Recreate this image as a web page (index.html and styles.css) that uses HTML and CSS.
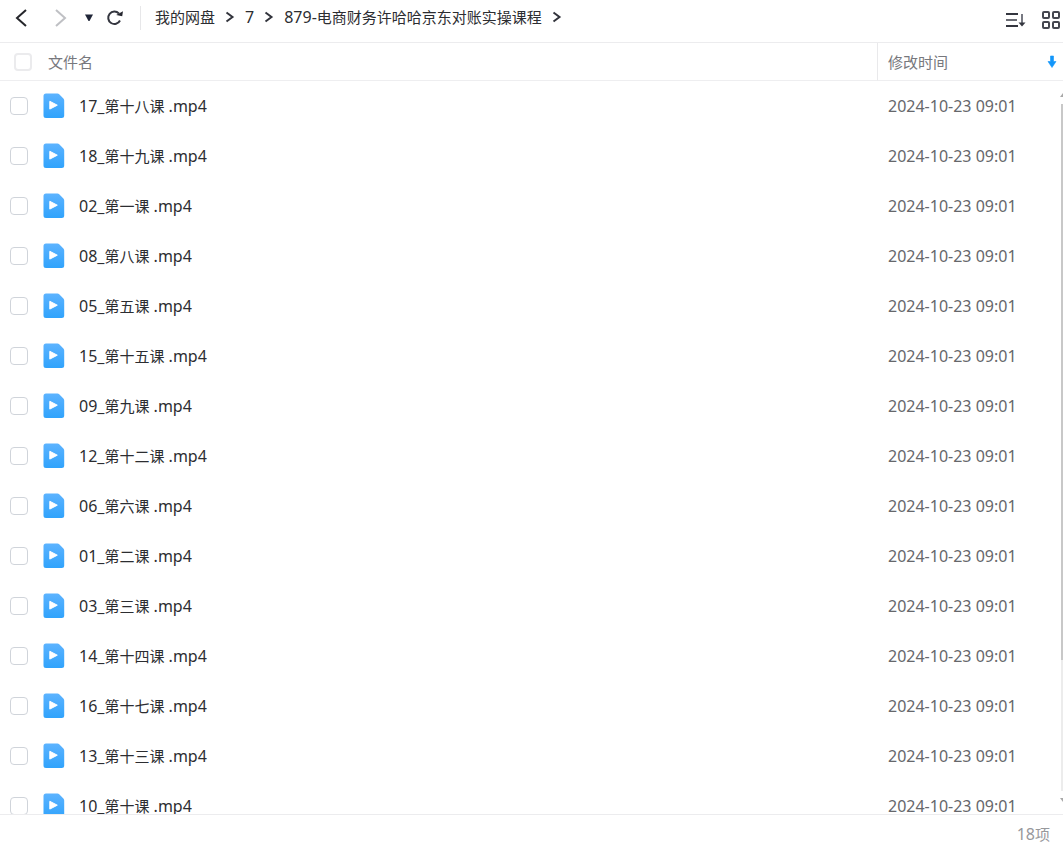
FILE: index.html
```html
<!DOCTYPE html>
<html lang="zh-CN">
<head>
<meta charset="utf-8">
<meta name="viewport" content="width=device-width, initial-scale=1">
<title>我的网盘</title>
<link rel="stylesheet" href="styles.css">
</head>
<body>
<svg class="defs" aria-hidden="true">
  <defs>
    <linearGradient id="file-fill" x1="0" y1="0" x2="0" y2="1">
      <stop offset="0" stop-color="#5cb3ff"/>
      <stop offset="1" stop-color="#30a3fc"/>
    </linearGradient>
    <symbol id="video" viewBox="0 0 22 26">
      <path d="M3 .5h11.500q1 0 1.700.7l4.200 4.300q.8.800.8 2v15a2.500 2.500 0 0 1-2.500 2.500H3A2.500 2.500 0 0 1 .5 22.500V3A2.500 2.500 0 0 1 3 .5z" fill="url(#file-fill)"/>
      <path d="M6.800 8.300v7.800l7.500-3.900z" fill="#fff" stroke="#fff" stroke-width="1" stroke-linejoin="round"/>
    </symbol>
    <symbol id="crumb" viewBox="0 0 10 12">
      <path d="M1.500 1.500 7.500 6l-6 4.500" fill="none" stroke="#32343c" stroke-width="2"/>
    </symbol>
  </defs>
</svg>
<div class="app">
  <header class="toolbar">
    <div class="nav">
      <button class="back" type="button" aria-label="后退"><svg width="14" height="20" viewBox="0 0 14 20"><path d="M12 2 3 10l9 8" fill="none" stroke="#25262b" stroke-width="2"/></svg></button>
      <button class="forward" type="button" aria-label="前进"><svg width="14" height="20" viewBox="0 0 14 20"><path d="m2 2 9 8-9 8" fill="none" stroke="#bfc0c4" stroke-width="2"/></svg></button>
      <button class="history" type="button" aria-label="历史"><svg width="10" height="8" viewBox="0 0 10 8"><path d="M1 .5h8L5.500 7h-1z" fill="#202638"/></svg></button>
      <button class="reload" type="button" aria-label="刷新"><svg width="18" height="18" viewBox="0 0 18 18"><path d="M14 11.500A6.200 6.200 0 1 1 12.900 4.500" fill="none" stroke="#34363f" stroke-width="2"/><path d="m10.200 6 6 1.300.8-5z" fill="#25262f"/></svg></button>
    </div>
    <nav class="crumbs" aria-label="路径">
      <a href="#"><span class="zh">我的网盘</span></a>
      <svg class="sep"><use href="#crumb"/></svg>
      <a href="#">7</a>
      <svg class="sep"><use href="#crumb"/></svg>
      <a href="#">879-<span class="zh">电商财务许哈哈京东对账实操课程</span></a>
      <svg class="sep"><use href="#crumb"/></svg>
    </nav>
    <div class="views">
      <button type="button" aria-label="排序"><svg width="22" height="18" viewBox="0 0 22 18"><path d="M1 3h12M1 15h12" stroke="#34363f" stroke-width="2"/><path d="M1 9h11" stroke="#6a6c74" stroke-width="2"/><path d="M17 3v10" stroke="#777982" stroke-width="2"/><path d="M13.500 11.500h7L17 15.500z" fill="#34363f"/></svg></button>
      <button type="button" aria-label="网格视图"><svg width="18" height="18" viewBox="0 0 18 18"><g fill="none" stroke="#454750" stroke-width="2"><rect x="1" y="1" width="6" height="6" rx="1"/><rect x="11" y="1" width="6" height="6" rx="1"/><rect x="1" y="11" width="6" height="6" rx="1"/><rect x="11" y="11" width="6" height="6" rx="1"/></g></svg></button>
    </div>
  </header>
  <main class="list">
    <table class="files">
      <thead>
        <tr>
          <th class="name" scope="col"><div class="head"><input type="checkbox" id="all"><label class="zh" for="all">文件名</label></div></th>
          <th class="time" scope="col"><div class="head"><span class="zh">修改时间</span><svg width="10" height="14" viewBox="0 0 10 14"><path d="M3.500 1h3v5.500H9L5 12.500 1 6.500h2.500z" fill="#1296fa" stroke="#1296fa" stroke-width=".6" stroke-linejoin="round"/></svg></div></th>
        </tr>
      </thead>
      <tbody>
        <tr><td><div class="file"><input type="checkbox" id="f1"><svg><use href="#video"/></svg><label for="f1">17_<span class="zh">第十八课</span> .mp4</label></div></td><td class="date">2024-10-23 09:01</td></tr>
        <tr><td><div class="file"><input type="checkbox" id="f2"><svg><use href="#video"/></svg><label for="f2">18_<span class="zh">第十九课</span> .mp4</label></div></td><td class="date">2024-10-23 09:01</td></tr>
        <tr><td><div class="file"><input type="checkbox" id="f3"><svg><use href="#video"/></svg><label for="f3">02_<span class="zh">第一课</span> .mp4</label></div></td><td class="date">2024-10-23 09:01</td></tr>
        <tr><td><div class="file"><input type="checkbox" id="f4"><svg><use href="#video"/></svg><label for="f4">08_<span class="zh">第八课</span> .mp4</label></div></td><td class="date">2024-10-23 09:01</td></tr>
        <tr><td><div class="file"><input type="checkbox" id="f5"><svg><use href="#video"/></svg><label for="f5">05_<span class="zh">第五课</span> .mp4</label></div></td><td class="date">2024-10-23 09:01</td></tr>
        <tr><td><div class="file"><input type="checkbox" id="f6"><svg><use href="#video"/></svg><label for="f6">15_<span class="zh">第十五课</span> .mp4</label></div></td><td class="date">2024-10-23 09:01</td></tr>
        <tr><td><div class="file"><input type="checkbox" id="f7"><svg><use href="#video"/></svg><label for="f7">09_<span class="zh">第九课</span> .mp4</label></div></td><td class="date">2024-10-23 09:01</td></tr>
        <tr><td><div class="file"><input type="checkbox" id="f8"><svg><use href="#video"/></svg><label for="f8">12_<span class="zh">第十二课</span> .mp4</label></div></td><td class="date">2024-10-23 09:01</td></tr>
        <tr><td><div class="file"><input type="checkbox" id="f9"><svg><use href="#video"/></svg><label for="f9">06_<span class="zh">第六课</span> .mp4</label></div></td><td class="date">2024-10-23 09:01</td></tr>
        <tr><td><div class="file"><input type="checkbox" id="f10"><svg><use href="#video"/></svg><label for="f10">01_<span class="zh">第二课</span> .mp4</label></div></td><td class="date">2024-10-23 09:01</td></tr>
        <tr><td><div class="file"><input type="checkbox" id="f11"><svg><use href="#video"/></svg><label for="f11">03_<span class="zh">第三课</span> .mp4</label></div></td><td class="date">2024-10-23 09:01</td></tr>
        <tr><td><div class="file"><input type="checkbox" id="f12"><svg><use href="#video"/></svg><label for="f12">14_<span class="zh">第十四课</span> .mp4</label></div></td><td class="date">2024-10-23 09:01</td></tr>
        <tr><td><div class="file"><input type="checkbox" id="f13"><svg><use href="#video"/></svg><label for="f13">16_<span class="zh">第十七课</span> .mp4</label></div></td><td class="date">2024-10-23 09:01</td></tr>
        <tr><td><div class="file"><input type="checkbox" id="f14"><svg><use href="#video"/></svg><label for="f14">13_<span class="zh">第十三课</span> .mp4</label></div></td><td class="date">2024-10-23 09:01</td></tr>
        <tr><td><div class="file"><input type="checkbox" id="f15"><svg><use href="#video"/></svg><label for="f15">10_<span class="zh">第十课</span> .mp4</label></div></td><td class="date">2024-10-23 09:01</td></tr>
      </tbody>
    </table>
    <div class="scrollbar" aria-hidden="true">
      <svg width="3" height="4" viewBox="0 0 3 4"><path d="M0 4 3 0v4z" fill="#a8a8a8"/></svg>
      <div class="track"><div class="thumb"></div></div>
      <svg width="3" height="4" viewBox="0 0 3 4"><path d="M0 0h3v4z" fill="#a8a8a8"/></svg>
    </div>
  </main>
  <footer class="status">18<span class="zh">项</span></footer>
</div>
</body>
</html>
```

FILE: styles.css
```css
* {
  box-sizing: border-box;
}

body {
  margin: 0;
  background: #fff;
  color: #2c2d31;
  font: 16px/24px "Noto Sans", "Noto Sans CJK SC", sans-serif;
}

svg {
  display: block;
  flex: none;
}

button {
  display: block;
  padding: 0;
  border: 0;
  background: none;
}

.defs {
  position: absolute;
  width: 0;
  height: 0;
}

.zh {
  font-family: "Noto Sans CJK SC", sans-serif;
  font-size: 15px;
  line-height: 20px;
}

.app {
  display: flex;
  flex-direction: column;
  height: 100vh;
}

.toolbar {
  display: flex;
  flex: none;
  align-items: center;
  height: 43px;
  padding: 0 3px 6px 14px;
  border-bottom: 1px solid #ececee;
}

.nav {
  display: flex;
  align-items: center;
  height: 24px;
  padding-right: 16px;
  border-right: 1px solid #e7e7e9;
}

.forward {
  margin-left: 26px;
}

.history {
  margin-left: 16px;
}

.reload {
  margin-left: 12px;
}

.crumbs {
  display: flex;
  align-items: center;
  gap: 10px;
  padding: 0 0 2px 14px;
  white-space: nowrap;
}

.crumbs a {
  color: inherit;
  text-decoration: none;
}

.sep {
  width: 10px;
  height: 12px;
}

.views {
  display: flex;
  gap: 15px;
  margin-left: auto;
  padding-top: 4px;
}

.list {
  position: relative;
  flex: 1;
  min-height: 0;
  overflow: hidden;
}

.files {
  width: 100%;
  border-collapse: separate;
  border-spacing: 0;
  table-layout: fixed;
}

th,
td {
  padding: 0;
  text-align: left;
  font-weight: 400;
}

th {
  height: 38px;
  border-bottom: 1px solid #eeeef0;
  color: #77787d;
}

.time {
  width: 186px;
  padding: 0 6px 0 10px;
  border-left: 1px solid #e9e9eb;
}

.head {
  display: flex;
  align-items: center;
}

.name .head {
  gap: 16px;
  padding-left: 14px;
}

.time .head {
  justify-content: space-between;
}

td {
  height: 50px;
}

.file {
  display: flex;
  align-items: center;
  padding-left: 10px;
}

.file svg {
  width: 22px;
  height: 26px;
  margin: 0 14px 0 15px;
}

.date {
  padding-left: 11px;
  color: #66676b;
}

input {
  flex: none;
  width: 18px;
  height: 18px;
  margin: 0;
  border: 1px solid #d0d4da;
  border-radius: 4px;
  appearance: none;
  background: #fff;
}

th input {
  border: 2px solid #ebebed;
}

.scrollbar {
  position: absolute;
  top: 50px;
  right: 0;
  bottom: 12px;
  display: flex;
  flex-direction: column;
  align-items: flex-end;
  gap: 7px;
  width: 3px;
}

.track {
  flex: 1;
  width: 2px;
  background: #ececec;
}

.thumb {
  height: 81%;
  background: #c8c8c8;
}

.status {
  flex: none;
  height: 33px;
  padding: 7px 13px 0 0;
  border-top: 1px solid #ececee;
  color: #97989c;
  text-align: right;
}
```
